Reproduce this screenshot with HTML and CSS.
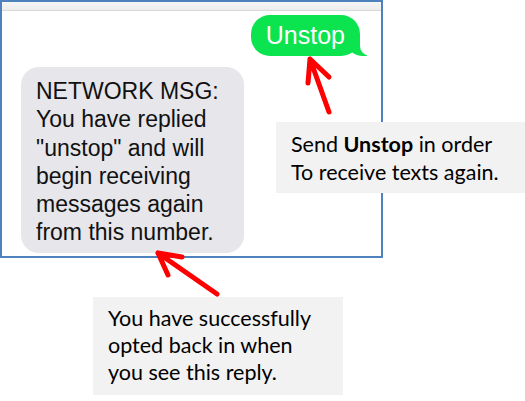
FILE: index.html
```html
<!DOCTYPE html>
<html lang="en">
<head>
    <meta charset="UTF-8">
    <meta name="viewport" content="width=device-width, initial-scale=1.0">
    <title>Unstop Texts</title>
    <link rel="stylesheet" href="styles.css">
</head>
<body>
    <div class="page">
        <!-- phone screenshot -->
        <div class="screen">
            <div class="status-strip"></div>
            <div class="thread">
                <div class="bubble sent">Unstop</div>
                <div class="bubble received">NETWORK MSG:<br>You have replied<br>"unstop" and will<br>begin receiving<br>messages again<br>from this number.</div>
            </div>
        </div>

        <!-- annotations -->
        <svg class="arrows" width="525" height="401" viewBox="0 0 525 401">
            <g fill="none" stroke="#ff0000" stroke-width="5" stroke-linecap="round" stroke-linejoin="round">
                <path d="M329 112 L310 59 M308 83 L310 59 L329 77"/>
                <path d="M217 294 L158 253 M168 275 L158 253 L182 257"/>
            </g>
        </svg>

        <div class="note note-send">
            <p>Send <strong>Unstop</strong> in order<br>To receive texts again.</p>
        </div>

        <div class="note note-optin">
            <p>You have successfully<br>opted back in when<br>you see this reply.</p>
        </div>
    </div>
</body>
</html>
```

FILE: styles.css
```css
  body {
      margin: 0;
      background-color: #fff;
  }
  .page {
      position: relative;
      width: 525px;
      height: 401px;
      overflow: hidden;
  }
  .screen {
      width: 383px;
      height: 258px;
      box-sizing: border-box;
      border: 2px solid #4f81bd;
      overflow: hidden;
      background-color: #fff;
  }
  .status-strip {
      height: 8px;
      background: linear-gradient(#f6f6f6, #ededed);
      border-bottom: 1px solid #d8d8d8;
  }
  .thread {
      display: flex;
      flex-direction: column;
      padding: 4px 21px 0 19px;
      gap: 11px;
      font-family: "Liberation Sans", Arial, sans-serif;
  }
  .bubble {
      position: relative;
      border-radius: 19px;
  }
  .sent {
      align-self: flex-end;
      background-color: #0be34f;
      color: #fff;
      font-size: 25px;
      line-height: 29px;
      padding: 6px 15px;
  }
  .sent::before {
      content: "";
      position: absolute;
      right: -7px;
      bottom: 0;
      width: 20px;
      height: 20px;
      background-color: #0be34f;
      border-bottom-left-radius: 16px 14px;
  }
  .sent::after {
      content: "";
      position: absolute;
      right: -26px;
      bottom: 0;
      width: 26px;
      height: 20px;
      background-color: #fff;
      border-bottom-left-radius: 10px;
  }
  .received {
      align-self: flex-start;
      width: 223px;
      box-sizing: border-box;
      background-color: #e6e6eb;
      color: #111;
      font-size: 23px;
      line-height: 28.3px;
      padding: 10px 0 6px 15px;
      border-radius: 18px;
  }
  .arrows {
      position: absolute;
      left: 0;
      top: 0;
      pointer-events: none;
  }
  .note {
      position: absolute;
      background-color: #f2f2f2;
      font-family: Lato, "Open Sans", sans-serif;
      font-size: 21.5px;
      color: #000;
  }
  .note p {
      margin: 0;
  }
  .note-send {
      left: 276px;
      top: 122px;
      width: 249px;
      height: 71px;
      box-sizing: border-box;
      padding: 8px 0 0 15px;
      line-height: 28px;
  }
  .note-optin {
      left: 93px;
      top: 297px;
      width: 250px;
      height: 98px;
      box-sizing: border-box;
      padding: 8px 0 0 15px;
      line-height: 27px;
  }
```
